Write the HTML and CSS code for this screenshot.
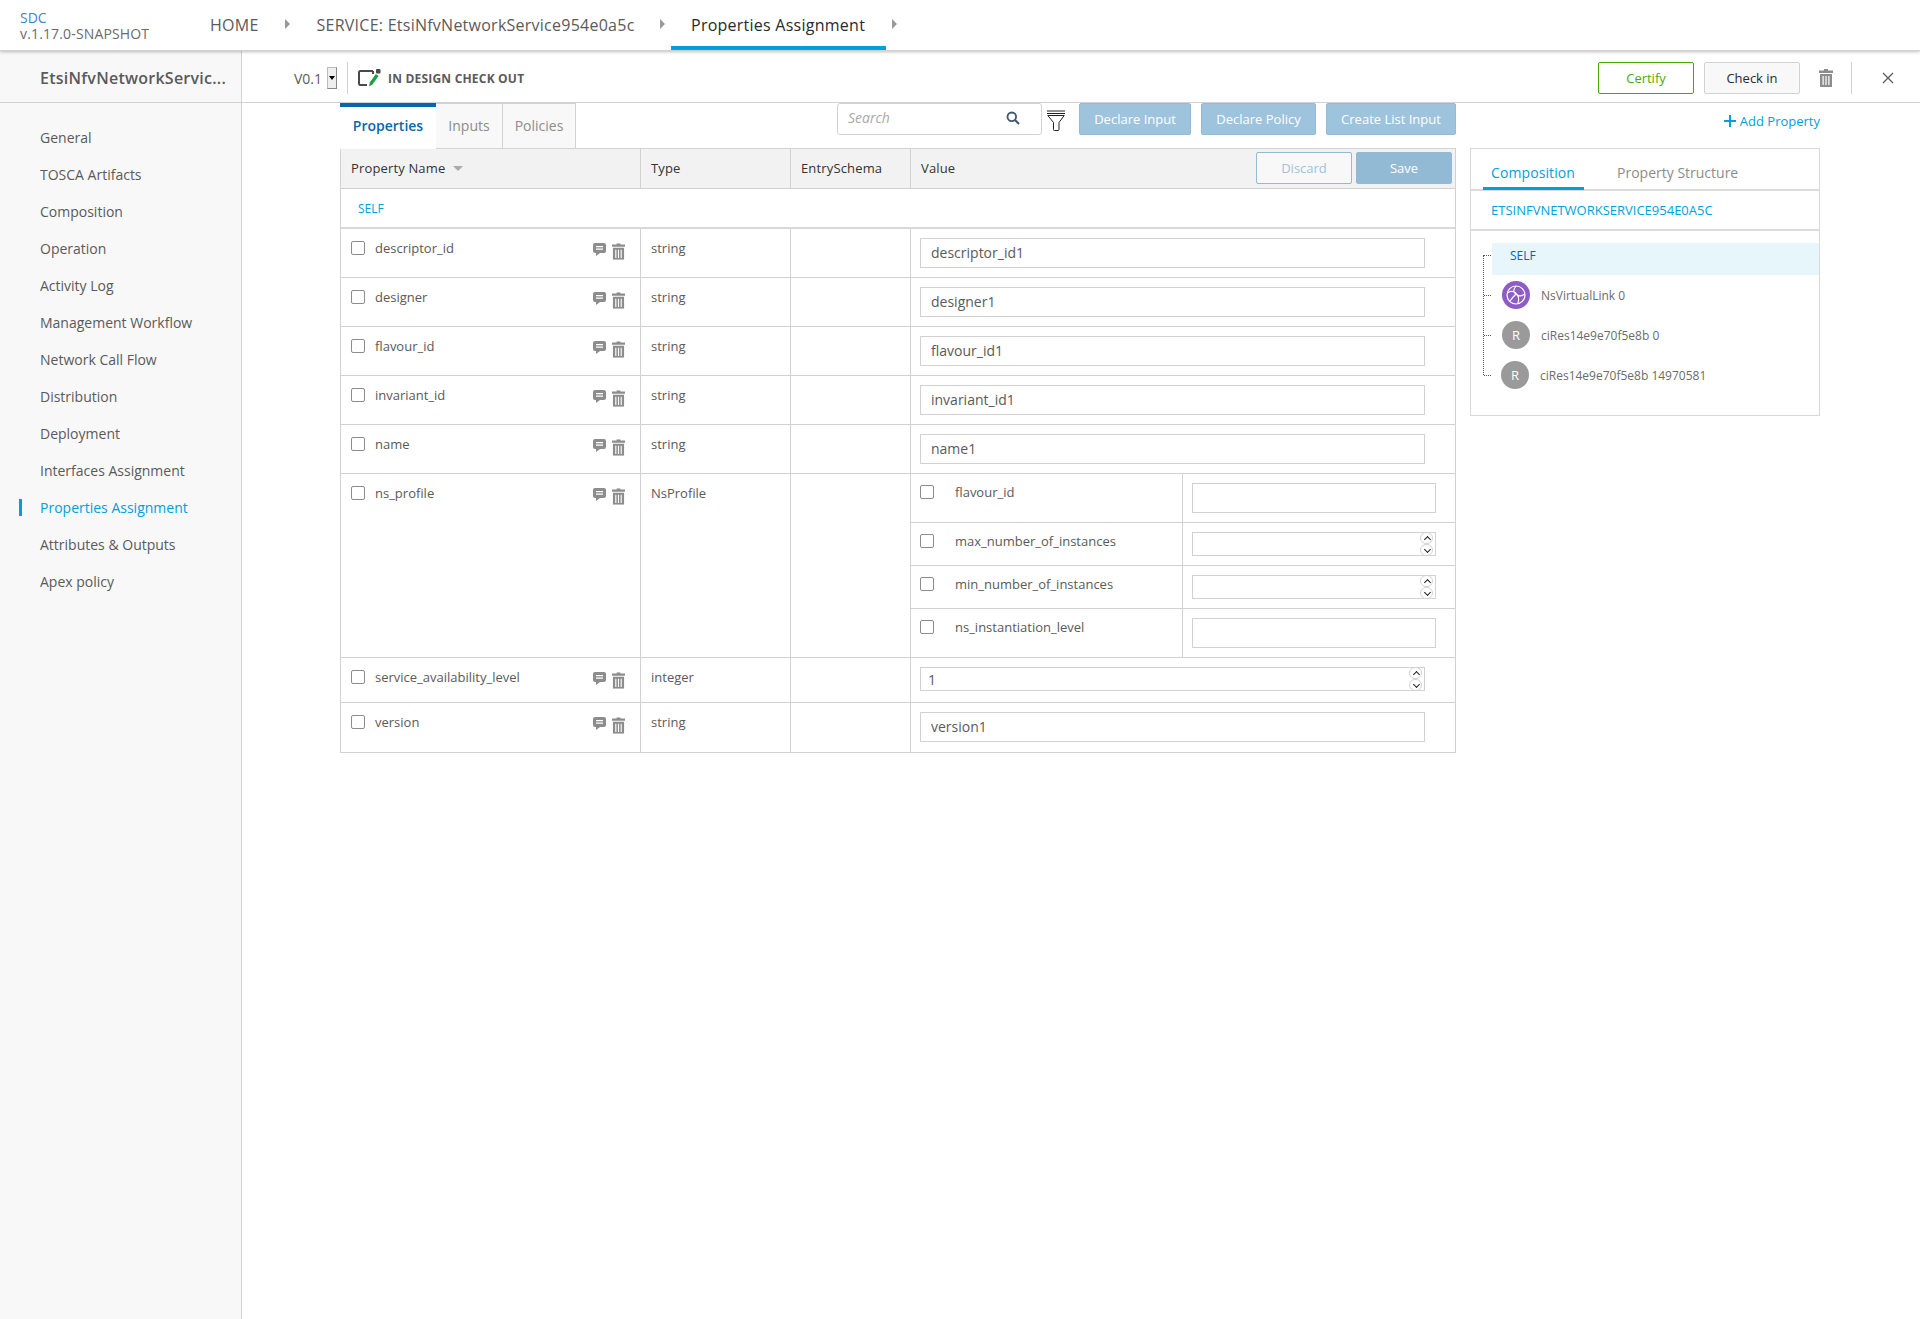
FILE: index.html
```html
<!DOCTYPE html>
<html lang="en">
<head>
  <meta charset="UTF-8">
  <meta name="viewport" content="width=device-width, initial-scale=1.0">
  <title>SDC - Properties Assignment</title>
  <link rel="stylesheet" href="styles.css">
</head>
<body>

  <!-- Top Navigation -->
  <div class="topbar">
    <div class="brand">
      <div class="brand-name">SDC</div>
      <div class="brand-version">v.1.17.0-SNAPSHOT</div>
    </div>
    <div class="crumb crumb-home">HOME</div>
    <span class="crumb-arrow arrow-home"></span>
    <div class="crumb crumb-service">SERVICE: EtsiNfvNetworkService954e0a5c</div>
    <span class="crumb-arrow arrow-service"></span>
    <div class="crumb crumb-active">Properties Assignment</div>
    <span class="crumb-arrow arrow-active"></span>
  </div>

  <div class="page">

    <!-- Left Menu -->
    <div class="sidebar">
      <div class="sidebar-title">EtsiNfvNetworkServic...</div>
      <div class="menu">
        <div class="menu-item">General</div>
        <div class="menu-item">TOSCA Artifacts</div>
        <div class="menu-item">Composition</div>
        <div class="menu-item">Operation</div>
        <div class="menu-item">Activity Log</div>
        <div class="menu-item">Management Workflow</div>
        <div class="menu-item">Network Call Flow</div>
        <div class="menu-item">Distribution</div>
        <div class="menu-item">Deployment</div>
        <div class="menu-item">Interfaces Assignment</div>
        <div class="menu-item active">Properties Assignment</div>
        <div class="menu-item">Attributes &amp; Outputs</div>
        <div class="menu-item">Apex policy</div>
      </div>
    </div>

    <div class="main">

      <!-- Version Bar -->
      <div class="versionbar">
        <div class="version-label">V0.1</div>
        <div class="version-select"></div>
        <div class="vdivider"></div>
        <svg class="status-icon" width="24" height="20" viewBox="0 0 24 20">
          <path d="M16 3H3a1.500 1.500 0 0 0-1 1.500v11A1.500 1.500 0 0 0 3 17h7M16 3v3" fill="none" stroke="#4a4a4a" stroke-width="2"/>
          <path d="M12 18.500l.8-4 6-8.500 2.700 2-6 8.500z" fill="#1e9e46"/>
          <rect x="19" y="1" width="4.500" height="4.500" rx="1" fill="#4a4a4a"/>
        </svg>
        <div class="status-text">IN DESIGN CHECK OUT</div>
        <div class="spacer"></div>
        <button class="btn-certify">Certify</button>
        <button class="btn-checkin">Check in</button>
        <svg class="bar-trash" width="14" height="18" viewBox="0 0 14 18"><use href="#trash"/></svg>
        <div class="vdivider bar-divider"></div>
        <svg class="bar-close" width="12" height="12" viewBox="0 0 12 12">
          <path d="M1 1l10 10M11 1L1 11" stroke="#5a5a5a" stroke-width="1.300" fill="none"/>
        </svg>
      </div>

      <div class="content">
        <div class="workspace">

          <div class="toolbar">
            <div class="tabs">
              <div class="tab active">Properties</div>
              <div class="tab tab-inputs">Inputs</div>
              <div class="tab tab-policies">Policies</div>
            </div>
            <div class="spacer"></div>
            <div class="search">
              <span class="search-text">Search</span>
              <svg width="14" height="14" viewBox="0 0 14 14">
                <circle cx="5.800" cy="5.800" r="4.300" fill="none" stroke="#40566b" stroke-width="1.800"/>
                <path d="M9 9l4 4" stroke="#40566b" stroke-width="2"/>
              </svg>
            </div>
            <svg class="filter-icon" width="18" height="21" viewBox="0 0 18 21">
              <path d="M0 1h18M0 3.500h18" stroke="#222" stroke-width="1"/>
              <path d="M.8 5.500h16.400L12 12.500v7a1 1 0 0 1-1 1H7.500a1 1 0 0 1-1-1v-7z" fill="#fff" stroke="#222" stroke-width="1"/>
            </svg>
            <button class="btn-declare">Declare Input</button>
            <button class="btn-declare policy">Declare Policy</button>
            <button class="btn-declare list">Create List Input</button>
          </div>

          <div class="table">
            <div class="row head">
              <div class="cell">Property Name <span class="sort-caret"></span></div>
              <div class="cell">Type</div>
              <div class="cell">EntrySchema</div>
              <div class="cell head-value">
                <span>Value</span>
                <div class="head-actions">
                  <button class="btn-discard">Discard</button>
                  <button class="btn-save">Save</button>
                </div>
              </div>
            </div>
            <div class="self-row">SELF</div>

            <div class="row">
              <div class="cell name-cell">
                <span class="checkbox"></span><span class="prop-name">descriptor_id</span>
                <svg class="i-comment" viewBox="0 0 13 13"><use href="#comment"/></svg>
                <svg class="i-trash" viewBox="0 0 14 18"><use href="#trash"/></svg>
              </div>
              <div class="cell">string</div>
              <div class="cell"></div>
              <div class="cell value-cell"><input class="text-input" value="descriptor_id1"></div>
            </div>

            <div class="row">
              <div class="cell name-cell">
                <span class="checkbox"></span><span class="prop-name">designer</span>
                <svg class="i-comment" viewBox="0 0 13 13"><use href="#comment"/></svg>
                <svg class="i-trash" viewBox="0 0 14 18"><use href="#trash"/></svg>
              </div>
              <div class="cell">string</div>
              <div class="cell"></div>
              <div class="cell value-cell"><input class="text-input" value="designer1"></div>
            </div>

            <div class="row">
              <div class="cell name-cell">
                <span class="checkbox"></span><span class="prop-name">flavour_id</span>
                <svg class="i-comment" viewBox="0 0 13 13"><use href="#comment"/></svg>
                <svg class="i-trash" viewBox="0 0 14 18"><use href="#trash"/></svg>
              </div>
              <div class="cell">string</div>
              <div class="cell"></div>
              <div class="cell value-cell"><input class="text-input" value="flavour_id1"></div>
            </div>

            <div class="row">
              <div class="cell name-cell">
                <span class="checkbox"></span><span class="prop-name">invariant_id</span>
                <svg class="i-comment" viewBox="0 0 13 13"><use href="#comment"/></svg>
                <svg class="i-trash" viewBox="0 0 14 18"><use href="#trash"/></svg>
              </div>
              <div class="cell">string</div>
              <div class="cell"></div>
              <div class="cell value-cell"><input class="text-input" value="invariant_id1"></div>
            </div>

            <div class="row">
              <div class="cell name-cell">
                <span class="checkbox"></span><span class="prop-name">name</span>
                <svg class="i-comment" viewBox="0 0 13 13"><use href="#comment"/></svg>
                <svg class="i-trash" viewBox="0 0 14 18"><use href="#trash"/></svg>
              </div>
              <div class="cell">string</div>
              <div class="cell"></div>
              <div class="cell value-cell"><input class="text-input" value="name1"></div>
            </div>

            <div class="row row-profile">
              <div class="cell name-cell">
                <span class="checkbox"></span><span class="prop-name">ns_profile</span>
                <svg class="i-comment" viewBox="0 0 13 13"><use href="#comment"/></svg>
                <svg class="i-trash" viewBox="0 0 14 18"><use href="#trash"/></svg>
              </div>
              <div class="cell">NsProfile</div>
              <div class="cell"></div>
              <div class="cell nested">
                <div class="sub-row">
                  <div class="sub-name"><span class="checkbox"></span><span>flavour_id</span></div>
                  <div class="sub-value"><input class="text-input"></div>
                </div>
                <div class="sub-row short">
                  <div class="sub-name"><span class="checkbox"></span><span>max_number_of_instances</span></div>
                  <div class="sub-value">
                    <div class="number-wrap"><input class="num-input"><div class="spinner"><span class="spin-up"></span><span class="spin-down"></span></div></div>
                  </div>
                </div>
                <div class="sub-row short">
                  <div class="sub-name"><span class="checkbox"></span><span>min_number_of_instances</span></div>
                  <div class="sub-value">
                    <div class="number-wrap"><input class="num-input"><div class="spinner"><span class="spin-up"></span><span class="spin-down"></span></div></div>
                  </div>
                </div>
                <div class="sub-row">
                  <div class="sub-name"><span class="checkbox"></span><span>ns_instantiation_level</span></div>
                  <div class="sub-value"><input class="text-input"></div>
                </div>
              </div>
            </div>

            <div class="row row-service">
              <div class="cell name-cell">
                <span class="checkbox"></span><span class="prop-name">service_availability_level</span>
                <svg class="i-comment" viewBox="0 0 13 13"><use href="#comment"/></svg>
                <svg class="i-trash" viewBox="0 0 14 18"><use href="#trash"/></svg>
              </div>
              <div class="cell">integer</div>
              <div class="cell"></div>
              <div class="cell value-cell">
                <div class="number-wrap"><input class="num-input" value="1"><div class="spinner"><span class="spin-up"></span><span class="spin-down"></span></div></div>
              </div>
            </div>

            <div class="row row-version">
              <div class="cell name-cell">
                <span class="checkbox"></span><span class="prop-name">version</span>
                <svg class="i-comment" viewBox="0 0 13 13"><use href="#comment"/></svg>
                <svg class="i-trash" viewBox="0 0 14 18"><use href="#trash"/></svg>
              </div>
              <div class="cell">string</div>
              <div class="cell"></div>
              <div class="cell value-cell"><input class="text-input" value="version1"></div>
            </div>
          </div>
        </div>

        <!-- Right Column -->
        <div class="right-col">
          <div class="add-property"><span class="plus"></span>Add Property</div>
          <div class="panel">
            <div class="panel-tabs">
              <div class="panel-tab active">Composition</div>
              <div class="panel-tab">Property Structure</div>
            </div>
            <div class="panel-service">ETSINFVNETWORKSERVICE954E0A5C</div>
            <div class="tree">
              <div class="tree-item tree-self"><span class="tick"></span>SELF</div>
              <div class="tree-item">
                <span class="tick"></span>
                <svg class="node-icon" viewBox="0 0 28 28">
                  <circle cx="14" cy="14" r="14" fill="#8e5bc7"/>
                  <circle cx="14" cy="14" r="9" fill="none" stroke="#fff" stroke-width="1.200"/>
                  <path d="M5.500 12c4-3 8-1 9 1s5 3 8 0M14 5c-3 4-3 6 0 8s3 6 2 9M8 20c2-3 5-6 6-7" fill="none" stroke="#fff" stroke-width="1.200"/>
                </svg>
                <span class="node-label">NsVirtualLink 0</span>
              </div>
              <div class="tree-item">
                <span class="tick"></span>
                <span class="node-circle">R</span>
                <span class="node-label">ciRes14e9e70f5e8b 0</span>
              </div>
              <div class="tree-item tree-last">
                <span class="tick"></span>
                <span class="node-circle">R</span>
                <span class="node-label">ciRes14e9e70f5e8b 14970581</span>
              </div>
            </div>
          </div>
        </div>
      </div>
    </div>
  </div>

  <!-- Shared icons -->
  <svg class="icon-defs" width="0" height="0">
    <symbol id="comment" viewBox="0 0 13 13">
      <path d="M2 0h9a2 2 0 0 1 2 2v6a2 2 0 0 1-2 2H7l-4 3v-3H2a2 2 0 0 1-2-2V2a2 2 0 0 1 2-2z" fill="#8c8c8c"/>
      <path d="M3 3h7v1.200H3zM3 5.500h7v1.200H3z" fill="#fff"/>
    </symbol>
    <symbol id="trash" viewBox="0 0 14 18">
      <path d="M5 0h4v1.500h5V4H0V1.500h5zM1 5h12v13H1zM3.500 7v9h1.200V7zM6.400 7v9h1.200V7zM9.300 7v9h1.200V7z" fill="#8c8c8c" fill-rule="evenodd"/>
    </symbol>
  </svg>

</body>
</html>
```

FILE: styles.css
```css
* {
  box-sizing: border-box;
}

body {
  margin: 0;
  padding: 0;
  background-color: #fff;
  color: #5a5a5a;
  font-family: "Open Sans", Arial, sans-serif;
  font-size: 13px;
  height: 1319px;
  overflow: hidden;
}

button {
  font-family: inherit;
  cursor: pointer;
}

.spacer {
  flex: 1;
}

.icon-defs {
  position: absolute;
}

/* Top navigation */
.topbar {
  display: flex;
  height: 51px;
  background-color: #fff;
  border-bottom: 1px solid #d2d2d2;
  box-shadow: 0 1px 3px rgba(0, 0, 0, 0.25);
  position: relative;
  z-index: 2;
}

.brand {
  width: 210px;
  padding: 10px 0 0 20px;
  font-size: 14px;
  line-height: 16px;
}

.brand-name {
  color: #3d86c6;
}

.brand-version {
  color: #6b6b6b;
  letter-spacing: 0.15px;
}

.crumb {
  font-size: 16px;
  line-height: 51px;
  color: #5a5a5a;
  letter-spacing: 0.25px;
}

.crumb-arrow {
  width: 0;
  height: 0;
  margin-top: 19px;
  border-left: 5px solid #999;
  border-top: 5px solid transparent;
  border-bottom: 5px solid transparent;
}

.arrow-home {
  margin-left: 26px;
  margin-right: 27px;
}

.arrow-service {
  margin-left: 25px;
  margin-right: 6px;
}

.arrow-active {
  margin-left: 6px;
}

.crumb-active {
  width: 215px;
  height: 50px;
  text-align: center;
  color: #2a2a2a;
  font-weight: 500;
  border-bottom: 4px solid #009fdb;
}

/* Page frame */
.page {
  display: flex;
  height: 1268px;
}

.sidebar {
  width: 242px;
  background-color: #f8f8f8;
  border-right: 1px solid #d2d2d2;
}

.sidebar-title {
  height: 52px;
  padding: 2px 0 0 40px;
  font-size: 16px;
  font-weight: 600;
  line-height: 50px;
  color: #5a5a5a;
  letter-spacing: 0.25px;
  border-bottom: 1px solid #d2d2d2;
}

.menu {
  padding-top: 16px;
}

.menu-item {
  height: 37px;
  padding-left: 40px;
  font-size: 14px;
  line-height: 37px;
  color: #5a5a5a;
  position: relative;
}

.menu-item.active {
  color: #009fdb;
}

.menu-item.active::before {
  content: "";
  position: absolute;
  left: 19px;
  top: 10px;
  width: 3px;
  height: 17px;
  background-color: #009fdb;
}

.main {
  flex: 1;
}

/* Version bar */
.versionbar {
  display: flex;
  align-items: center;
  height: 52px;
  padding: 3px 0 0 52px;
  border-bottom: 1px solid #d2d2d2;
}

.version-label {
  font-size: 14px;
  color: #5a5a5a;
}

.version-select {
  width: 10px;
  height: 22px;
  margin-left: 5px;
  background-color: #efefef;
  border: 1px solid #bbb;
  border-bottom-color: #888;
  border-right-color: #888;
  position: relative;
}

.version-select::after {
  content: "";
  position: absolute;
  left: 1px;
  top: 8px;
  border-top: 4px solid #000;
  border-left: 3px solid transparent;
  border-right: 3px solid transparent;
}

.vdivider {
  width: 1px;
  height: 32px;
  margin-left: 10px;
  background-color: #d2d2d2;
}

.status-icon {
  margin-left: 9px;
}

.status-text {
  margin-left: 7px;
  font-size: 12px;
  font-weight: 700;
  color: #5a5a5a;
  letter-spacing: 0.2px;
}

.btn-certify,
.btn-checkin {
  width: 96px;
  height: 32px;
  border-radius: 2px;
  font-size: 13px;
  padding: 0;
}

.btn-certify {
  background-color: #fff;
  border: 1px solid #4ca90c;
  color: #4ca90c;
}

.btn-checkin {
  margin-left: 10px;
  background-color: #f8f8f8;
  border: 1px solid #d2d2d2;
  color: #2a2a2a;
}

.bar-trash {
  margin-left: 19px;
}

.bar-divider {
  margin-left: 18px;
}

.bar-close {
  margin-left: 30px;
  margin-right: 26px;
}

/* Content */
.content {
  display: flex;
  padding-left: 98px;
}

.workspace {
  width: 1116px;
}

.toolbar {
  display: flex;
  align-items: flex-start;
  height: 45px;
}

.tabs {
  display: flex;
}

.tab {
  width: 67px;
  height: 46px;
  background-color: #f8f8f8;
  border: 1px solid #d2d2d2;
  border-left: none;
  font-size: 14px;
  line-height: 43px;
  text-align: center;
  color: #8c8c8c;
}

.tab.active {
  width: 96px;
  background-color: #fff;
  border: none;
  border-top: 4px solid #0568ae;
  border-bottom: 1px solid #fff;
  color: #0568ae;
  font-weight: 600;
  line-height: 38px;
  position: relative;
  z-index: 1;
}

.tab-inputs {
  width: 67px;
}

.tab-policies {
  width: 73px;
}

.search {
  display: flex;
  align-items: center;
  justify-content: space-between;
  width: 205px;
  height: 32px;
  padding: 0 21px 3px 10px;
  border: 1px solid #d2d2d2;
  border-radius: 3px;
}

.search-text {
  font-size: 14px;
  font-style: italic;
  color: #aaa;
}

.filter-icon {
  margin: 7px 0 0 5px;
}

.btn-declare {
  width: 112px;
  height: 32px;
  margin-left: 14px;
  padding: 0;
  background-color: #9dc3dd;
  border: 1px solid #93bbd6;
  border-radius: 2px;
  color: #fff;
  font-size: 13px;
}

.btn-declare.policy {
  width: 115px;
  margin-left: 10px;
}

.btn-declare.list {
  width: 130px;
  margin-left: 10px;
}

/* Table */
.table {
  border-left: 1px solid #d2d2d2;
  border-right: 1px solid #d2d2d2;
  width: 1116px;
}

.row {
  display: grid;
  grid-template-columns: 300px 150px 120px 1fr;
  height: 49px;
  border-bottom: 1px solid #d2d2d2;
}

.row.head {
  height: 41px;
  background-color: #f2f2f2;
  border-top: 1px solid #d2d2d2;
  color: #2a2a2a;
  font-weight: 500;
  letter-spacing: 0.15px;
}

.row.head .cell {
  padding-top: 0;
  line-height: 39px;
  color: #333;
}

.cell {
  padding: 10px 0 0 10px;
  line-height: 18px;
  border-right: 1px solid #d2d2d2;
}

.cell:last-child {
  border-right: none;
}

.sort-caret {
  display: inline-block;
  margin: 0 0 2px 4px;
  border-top: 5px solid #aaa;
  border-left: 5px solid transparent;
  border-right: 5px solid transparent;
}

.head-value {
  display: flex;
  justify-content: space-between;
}

.head-actions {
  display: flex;
  gap: 4px;
  padding: 3px 3px 0 0;
}

.btn-discard,
.btn-save {
  width: 96px;
  height: 32px;
  padding: 0;
  border-radius: 2px;
  font-size: 13px;
}

.btn-discard {
  background-color: #f8f8f8;
  border: 1px solid #93bbd6;
  color: #9dc3dd;
}

.btn-save {
  background-color: #93bad5;
  border: 1px solid #93bad5;
  color: #fff;
}

.self-row {
  height: 40px;
  padding-left: 17px;
  line-height: 40px;
  font-size: 12px;
  color: #009fdb;
  border-bottom: 2px solid #d8d8d8;
}

.name-cell {
  display: flex;
  align-items: flex-start;
}

.checkbox {
  flex: none;
  width: 14px;
  height: 14px;
  margin-top: 2px;
  background-color: #fff;
  border: 1px solid #8c8c8c;
  border-radius: 2px;
}

.prop-name {
  flex: 1;
  margin-left: 10px;
}

.i-comment {
  width: 13px;
  height: 13px;
  margin-top: 4px;
}

.i-trash {
  width: 13px;
  height: 17px;
  margin: 4px 15px 0 6px;
}

.value-cell {
  padding: 9px 0 0 9px;
}

.text-input {
  display: block;
  width: 505px;
  height: 30px;
  padding: 0 10px 2px;
  border: 1px solid #d2d2d2;
  border-radius: 0;
  outline: none;
  font-family: inherit;
  font-size: 14px;
  color: #5a5a5a;
}

.number-wrap {
  position: relative;
  width: 505px;
  height: 24px;
}

.num-input {
  display: block;
  width: 100%;
  height: 24px;
  padding: 0 7px;
  border: 1px solid #d2d2d2;
  border-radius: 0;
  outline: none;
  font-family: inherit;
  font-size: 14px;
  color: #5a5a5a;
}

.spinner {
  position: absolute;
  top: 0;
  right: 3px;
  width: 13px;
}

.spin-up,
.spin-down {
  display: block;
  height: 12px;
  background-color: #fff;
  border: 1px solid #d2d2d2;
  border-radius: 6px;
  position: relative;
}

.spin-up::after,
.spin-down::after {
  content: "";
  position: absolute;
  left: 3.5px;
  width: 4px;
  height: 4px;
  border-left: 1.5px solid #222;
  border-top: 1.5px solid #222;
  transform: rotate(45deg);
  top: 3.5px;
}

.spin-down::after {
  transform: rotate(225deg);
  top: 1.5px;
}

.row-profile {
  height: 184px;
}

.row-service {
  height: 45px;
}

.row-version {
  height: 50px;
}

.nested {
  padding: 0;
}

.sub-row {
  display: grid;
  grid-template-columns: 272px 1fr;
  height: 49px;
  border-bottom: 1px solid #d2d2d2;
}

.sub-row.short {
  height: 43px;
}

.sub-row:last-child {
  border-bottom: none;
  height: 48px;
}

.sub-name {
  display: flex;
  align-items: flex-start;
  gap: 21px;
  padding: 9px 0 0 9px;
  border-right: 1px solid #d2d2d2;
}

.sub-value {
  padding: 9px 0 0 9px;
}

.sub-value .text-input,
.sub-value .number-wrap {
  width: 244px;
}

/* Right column */
.right-col {
  width: 350px;
  margin-left: 14px;
}

.add-property {
  display: flex;
  align-items: center;
  justify-content: flex-end;
  height: 45px;
  padding-bottom: 10px;
  font-size: 13px;
  color: #009fdb;
}

.plus {
  width: 12px;
  height: 12px;
  margin-right: 4px;
  background:
    linear-gradient(#009fdb, #009fdb) center / 12px 2px no-repeat,
    linear-gradient(#009fdb, #009fdb) center / 2px 12px no-repeat;
}

.panel {
  height: 268px;
  border: 1px solid #d8d8d8;
}

.panel-tabs {
  display: flex;
  height: 42px;
  gap: 12px;
  padding-left: 12px;
  border-bottom: 2px solid #dcdcdc;
}

.panel-tab {
  height: 41px;
  padding: 0 9px;
  font-size: 14px;
  line-height: 48px;
  color: #8c8c8c;
}

.panel-tab.active {
  padding: 0 9px 0 8px;
  border-bottom: 3px solid #009fdb;
  color: #009fdb;
  font-weight: 500;
  letter-spacing: 0.1px;
  margin-right: 12px;
}

.panel-service {
  height: 40px;
  padding-left: 20px;
  line-height: 38px;
  font-size: 13px;
  color: #009fdb;
  border-bottom: 2px solid #dcdcdc;
}

.tree {
  position: relative;
  padding: 12px 0 0 21px;
}

.tree::before {
  content: "";
  position: absolute;
  left: 12px;
  top: 24px;
  height: 120px;
  border-left: 1px dotted #555;
}

.tree-item {
  display: flex;
  align-items: center;
  height: 40px;
  padding-left: 10px;
  font-size: 12px;
  color: #6b6b6b;
  position: relative;
}

.tree-self {
  height: 32px;
  margin-bottom: 0;
  padding-left: 18px;
  padding-bottom: 7px;
  background-color: #e6f6fb;
  color: #0568ae;
}

.tick {
  position: absolute;
  left: -8px;
  top: 50%;
  width: 7px;
  border-top: 1px dotted #555;
}

.tree-self .tick {
  top: 12px;
}

.node-icon,
.node-circle {
  flex: none;
  width: 28px;
  height: 28px;
}

.node-circle {
  border-radius: 50%;
  background-color: #9a9a9a;
  color: #fff;
  font-size: 13px;
  line-height: 28px;
  text-align: center;
}

.node-label {
  margin-left: 11px;
}

.tree-last {
  padding-left: 9px;
}
```
